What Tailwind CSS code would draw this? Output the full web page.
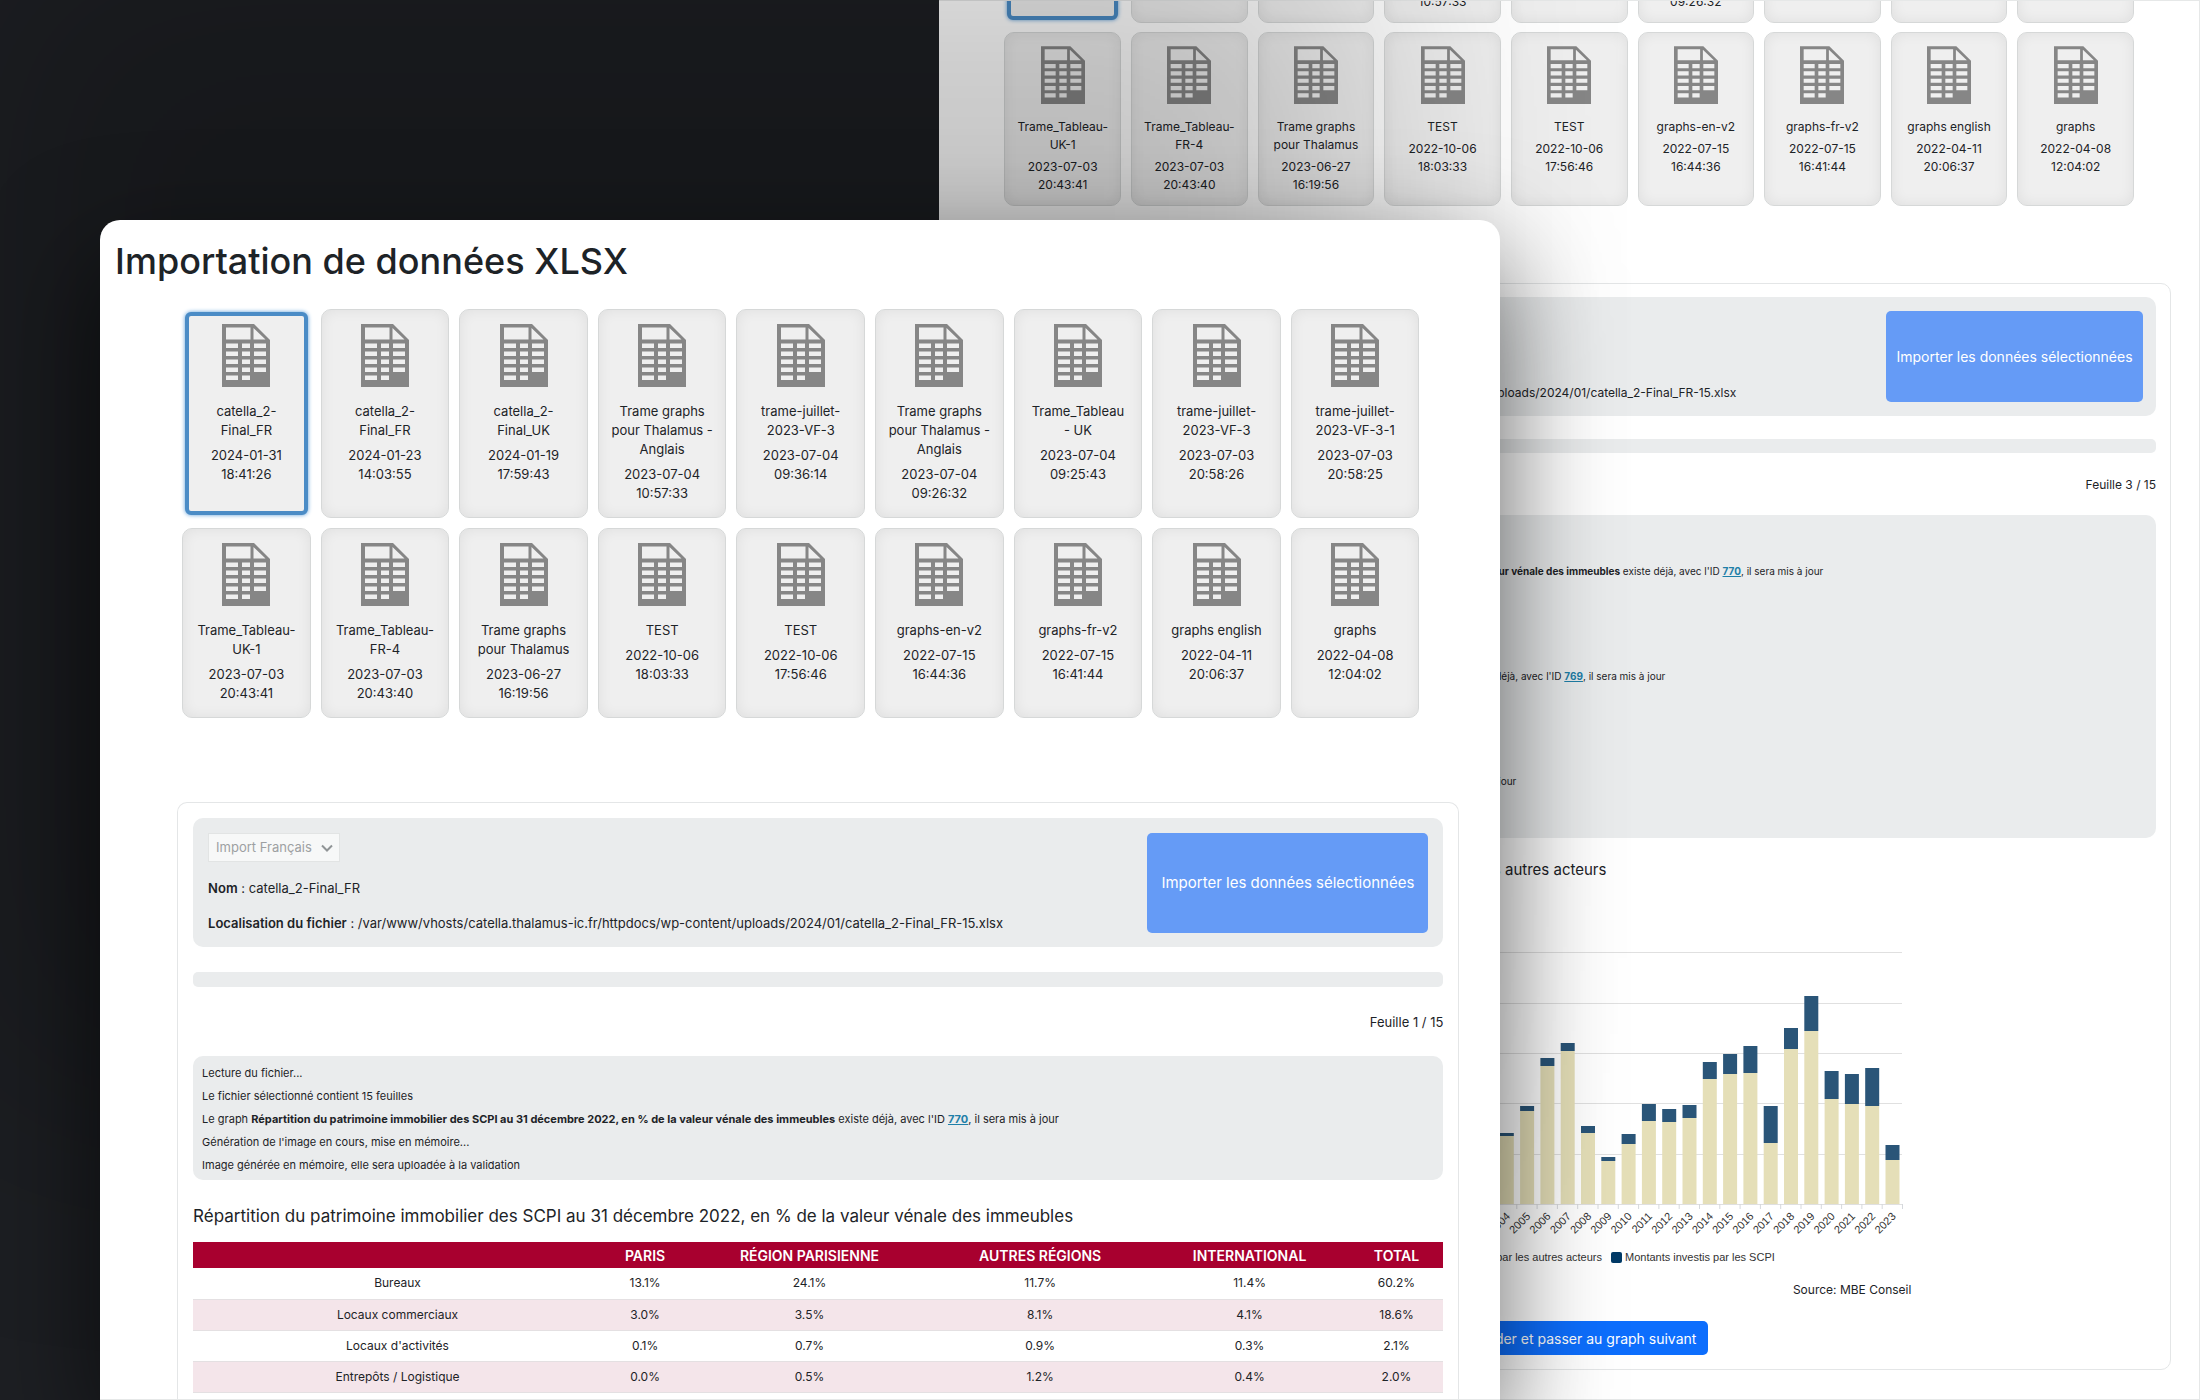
<!DOCTYPE html>
<html lang="fr">
<head>
<meta charset="utf-8">
<title>Importation de données XLSX</title>
<script src="https://cdn.jsdelivr.net/npm/@tailwindcss/browser@4"></script>
</head>
<body class="bg-[#1d1f23] font-['Inter','Liberation_Sans',sans-serif] text-[#1d2327]">
<svg class="hidden" aria-hidden="true">
  <symbol id="sheet" viewBox="0 0 48 63">
    <path fill="#868686" fill-rule="evenodd" d="M0 0H32L48 16V63H0ZM4 3.500V15.500H28.500V3.500ZM31.500 4V15.500H43.500ZM4 19.500V24H16V19.500ZM20 19.500V24H28V19.500ZM32 19.500V24H44V19.500ZM4 27.500V32H16V27.500ZM20 27.500V32H28V27.500ZM32 27.500V32H44V27.500ZM4 35.500V40H16V35.500ZM20 35.500V40H28V35.500ZM32 35.500V40H44V35.500ZM4 43.500V48H16V43.500ZM20 43.500V48H28V43.500ZM32 43.500V48H44V43.500ZM4 51.500V56H16V51.500ZM20 51.500V56H28V51.500Z"/>
  </symbol>
</svg>
<div class="relative h-screen min-h-[1400px] overflow-hidden">

  <!-- Back window: sheet 3 -->
  <section class="absolute inset-y-0 left-[42.7%] right-0 overflow-hidden border-y border-r border-[#e6e8e8] bg-white pl-[60px] pr-[28px]">
    <div id="back-files" class="-mt-[170px] ml-[5px] mr-[37px] grid grid-cols-9 gap-x-[10px] gap-y-[9px]"></div>
    <div class="mt-[77px] h-[1087px] rounded-[10px] border border-[#e4e6e7] px-[14px] pt-[13px]">
      <div class="flex h-[119px] items-start justify-between rounded-[10px] bg-[#eaeced] px-[13px] py-[14px]">
        <div class="flex h-full w-[709px] items-end justify-end">
          <p class="text-[12px] leading-[18px] whitespace-nowrap"><b class="font-semibold">Localisation du fichier</b> : /var/www/vhosts/catella.thalamus-ic.fr/httpdocs/wp-content/uploads/2024/01/catella_2-Final_FR-15.xlsx</p>
        </div>
        <button class="h-[91px] w-[257px] rounded-[5px] bg-[#659bf6] text-[14px] text-white">Importer les données sélectionnées</button>
      </div>
      <div class="mt-[23px] h-[14px] rounded-[5px] bg-[#eaeced]"></div>
      <p class="mt-[23px] text-right text-[12px] leading-[18px]">Feuille 3 / 15</p>
      <div class="mt-[21px] rounded-[10px] bg-[#eaeced] px-[8px] py-1 text-[10px] leading-[21px] whitespace-nowrap">
        <p>Lecture du fichier...</p>
        <p>Le fichier sélectionné contient 15 feuilles</p>
        <p class="w-[801px] text-right">Le graph <b class="font-bold">Répartition du patrimoine immobilier des SCPI au 31 décembre 2022, en % de la valeur vénale des immeubles</b> existe déjà, avec l'ID <a href="#" class="font-bold text-[#1f7fa8] underline">770</a>, il sera mis à jour</p>
        <p>Génération de l'image en cours, mise en mémoire...</p>
        <p>Image générée en mémoire, elle sera uploadée à la validation</p>
        <p>Image uploadée</p>
        <p>Lecture de la feuille 2</p>
        <p class="w-[643px] text-right">Le graph <b class="font-bold">Répartition du patrimoine des SCPI par catégorie</b> existe déjà, avec l'ID <a href="#" class="font-bold text-[#1f7fa8] underline">769</a>, il sera mis à jour</p>
        <p>Génération de l'image en cours, mise en mémoire...</p>
        <p>Image générée en mémoire, elle sera uploadée à la validation</p>
        <p>Image uploadée</p>
        <p>Lecture de la feuille 3</p>
        <p class="w-[494px] text-right">Le graph <b class="font-bold">Montants investis</b> existe déjà, il sera mis à jour</p>
        <p>Génération de l'image en cours, mise en mémoire...</p>
        <p>Image générée en mémoire, elle sera uploadée à la validation</p>
      </div>
      <h2 class="mt-[20px] w-[592px] text-right text-[15px] leading-6 whitespace-nowrap">Montants investis par les SCPI et par les autres acteurs</h2>
      <svg id="chart" class="mt-[18px] block" width="897" height="380" viewBox="1014 900 897 380" font-family="'Liberation Sans',Arial,sans-serif" font-size="11" fill="#333"></svg>
      <p class="w-[897px] text-right text-[12px] leading-5">Source: MBE Conseil</p>
      <button class="mt-[21px] ml-[400px] flex h-[34px] w-[294px] items-center justify-end rounded-[5px] bg-[#0d6efd] pr-[12px] text-[14px] text-white">Valider et passer au graph suivant</button>
    </div>
  </section>

  <!-- Front window: sheet 1 -->
  <main class="absolute top-[220px] bottom-0 left-[4.55%] flex w-[63.65%] flex-col overflow-hidden rounded-t-[20px] border-b border-[#e6e8e8] bg-white pl-[77px] pr-[41px] shadow-[0_40px_110px_rgba(0,0,0,0.6),-130px_-300px_260px_rgba(0,0,0,0.22)]">
    <h1 class="-ml-[62px] mt-[16px] text-[36px] leading-[50px] font-medium">Importation de données XLSX</h1>
    <div id="front-files" class="mt-[23px] ml-[5px] mr-[40px] grid grid-cols-9 gap-[10px]"></div>
    <div class="mt-[84px] flex-1 rounded-t-[10px] border border-b-0 border-[#e4e6e7] px-[15px] pt-[15px]">
      <div class="flex h-[129px] items-start justify-between rounded-[10px] bg-[#eaeced] px-[15px] py-[15px]">
        <div>
          <label class="relative block w-[132px]">
            <select aria-label="Langue d'import" class="block h-[29px] w-full appearance-none border border-[#e2e4e4] bg-[#f7f8f8] px-[7px] text-[13px] text-[#9da0a2]"><option>Import Français</option></select>
            <svg class="pointer-events-none absolute top-[11px] right-[7px]" width="12" height="8" viewBox="0 0 12 8" fill="none" stroke="#909496" stroke-width="2"><path d="M1 1.500L6 6.500L11 1.500"/></svg>
          </label>
          <p class="mt-[16px] text-[13px] leading-5"><b class="font-semibold">Nom</b> : catella_2-Final_FR</p>
          <p class="mt-[15px] text-[13px] leading-5"><b class="font-semibold">Localisation du fichier</b> : /var/www/vhosts/catella.thalamus-ic.fr/httpdocs/wp-content/uploads/2024/01/catella_2-Final_FR-15.xlsx</p>
        </div>
        <button class="h-[100px] w-[281px] rounded-[5px] bg-[#659bf6] text-[15px] text-white">Importer les données sélectionnées</button>
      </div>
      <div class="mt-[25px] h-[15px] rounded-[5px] bg-[#eaeced]"></div>
      <p class="mt-[25px] text-right text-[13px] leading-5">Feuille 1 / 15</p>
      <div class="mt-[24px] rounded-[10px] bg-[#eaeced] px-[9px] pt-[6px] pb-[3px] text-[11px] leading-[23px]">
        <p>Lecture du fichier...</p>
        <p>Le fichier sélectionné contient 15 feuilles</p>
        <p>Le graph <b class="font-bold">Répartition du patrimoine immobilier des SCPI au 31 décembre 2022, en % de la valeur vénale des immeubles</b> existe déjà, avec l'ID <a href="#" class="font-bold text-[#1f7fa8] underline">770</a>, il sera mis à jour</p>
        <p>Génération de l'image en cours, mise en mémoire...</p>
        <p>Image générée en mémoire, elle sera uploadée à la validation</p>
      </div>
      <h2 class="mt-[22px] text-[17px] leading-7">Répartition du patrimoine immobilier des SCPI au 31 décembre 2022, en % de la valeur vénale des immeubles</h2>
      <table class="mt-[12px] w-full table-fixed border-collapse text-center text-[12px]">
        <colgroup><col class="w-[32.7%]"><col class="w-[6.9%]"><col class="w-[19.4%]"><col class="w-[17.5%]"><col class="w-[16%]"><col class="w-[7.5%]"></colgroup>
        <thead><tr class="h-[26px] bg-[#a8002f] text-[14px] text-white"><th></th><th class="font-semibold">PARIS</th><th class="font-semibold">RÉGION PARISIENNE</th><th class="font-semibold">AUTRES RÉGIONS</th><th class="font-semibold">INTERNATIONAL</th><th class="font-semibold">TOTAL</th></tr></thead>
        <tbody>
          <tr class="h-[31px] border-b border-[#e4e0e2]"><td>Bureaux</td><td>13.1%</td><td>24.1%</td><td>11.7%</td><td>11.4%</td><td>60.2%</td></tr>
          <tr class="h-[31px] border-b border-[#e4e0e2] bg-[#f4e5ea]"><td>Locaux commerciaux</td><td>3.0%</td><td>3.5%</td><td>8.1%</td><td>4.1%</td><td>18.6%</td></tr>
          <tr class="h-[31px] border-b border-[#e4e0e2]"><td>Locaux d'activités</td><td>0.1%</td><td>0.7%</td><td>0.9%</td><td>0.3%</td><td>2.1%</td></tr>
          <tr class="h-[31px] border-b border-[#e4e0e2] bg-[#f4e5ea]"><td>Entrepôts / Logistique</td><td>0.0%</td><td>0.5%</td><td>1.2%</td><td>0.4%</td><td>2.0%</td></tr>
        </tbody>
      </table>
    </div>
  </main>
</div>
<script>
const files = [
  ["catella_2-<br>Final_FR","2024-01-31","18:41:26"],["catella_2-<br>Final_FR","2024-01-23","14:03:55"],["catella_2-<br>Final_UK","2024-01-19","17:59:43"],
  ["Trame graphs<br>pour Thalamus -<br>Anglais","2023-07-04","10:57:33"],["trame-juillet-<br>2023-VF-3","2023-07-04","09:36:14"],["Trame graphs<br>pour Thalamus -<br>Anglais","2023-07-04","09:26:32"],
  ["Trame_Tableau<br>- UK","2023-07-04","09:25:43"],["trame-juillet-<br>2023-VF-3","2023-07-03","20:58:26"],["trame-juillet-<br>2023-VF-3-1","2023-07-03","20:58:25"],
  ["Trame_Tableau-<br>UK-1","2023-07-03","20:43:41"],["Trame_Tableau-<br>FR-4","2023-07-03","20:43:40"],["Trame graphs<br>pour Thalamus","2023-06-27","16:19:56"],
  ["TEST","2022-10-06","18:03:33"],["TEST","2022-10-06","17:56:46"],["graphs-en-v2","2022-07-15","16:44:36"],["graphs-fr-v2","2022-07-15","16:41:44"],["graphs english","2022-04-11","20:06:37"],["graphs","2022-04-08","12:04:02"]
];
const idle = "border border-[#d6d8d8] shadow-[inset_0_0_14px_rgba(0,0,0,0.07)] rounded-[10px]";
const selected = "m-[3px] border-4 border-[#4b8cc6] shadow-[0_0_4px_#5b9dd9] rounded-[6px]";
const sizes = {
  front: { idle: "pt-[14px] pb-[14px] text-[13px] leading-[19px]", sel: "pt-[8px] pb-[8px] text-[13px] leading-[19px]", icon: "mb-[15px] h-[63px] w-[48px]", date: "mt-[6px]" },
  back: { idle: "pt-[13px] pb-[11px] text-[12px] leading-[18px]", sel: "pt-[7px] pb-[5px] text-[12px] leading-[18px]", icon: "mb-[14px] h-[58px] w-[44px]", date: "mt-[4px]" }
};
function fill(id, s) {
  document.getElementById(id).innerHTML = files.map(([n, d, t], i) =>
    `<button class="flex flex-col items-center justify-start bg-[#efefef] whitespace-nowrap ${i ? idle + " " + s.idle : selected + " " + s.sel}"><svg class="${s.icon} shrink-0" preserveAspectRatio="none"><use href="#sheet"/></svg><span>${n}</span><span class="${s.date}">${d}<br>${t}</span></button>`).join("");
}
fill("front-files", sizes.front);
fill("back-files", sizes.back);

// Stacked columns: [year, top of the beige part, top of the blue part]
const bars = [[2004,1136,1133],[2005,1111,1106],[2006,1066,1058],[2007,1051,1043],[2008,1133,1126],[2009,1161,1157],[2010,1144,1134],[2011,1121,1104],[2012,1122,1109],[2013,1118,1105],[2014,1079,1062],[2015,1074,1054],[2016,1073,1046],[2017,1143,1106],[2018,1049,1028],[2019,1031,996],[2020,1099,1071],[2021,1104,1074],[2022,1106,1068],[2023,1160,1145]];
const base = 1204;
let g = [952,1003,1053,1103,1154,1204].map(y => `<path d="M1060 ${y + .5}H1902" stroke="#e0e0e0"/>`).join("");
bars.forEach(([y, b, t], i) => {
  const x = 1892.5 - (19 - i) * 20.3;
  g += `<rect x="${x - 7}" y="${b}" width="14" height="${base - b}" fill="#e5dfb8"/><rect x="${x - 7}" y="${t}" width="14" height="${b - t}" fill="#2a5578"/><path d="M${x + 10} 1204V1209" stroke="#d5d8dc"/><text transform="translate(${x + 4} 1217) rotate(-45)" text-anchor="end">${y}</text>`;
});
g += `<rect x="1378" y="1252" width="11" height="11" rx="2" fill="#e5dfb8"/><text x="1602" y="1261" text-anchor="end">Montants investis par les autres acteurs</text><rect x="1611" y="1252" width="11" height="11" rx="2" fill="#003a66"/><text x="1625" y="1261">Montants investis par les SCPI</text>`;
document.getElementById("chart").innerHTML = g;
</script>
</body>
</html>
